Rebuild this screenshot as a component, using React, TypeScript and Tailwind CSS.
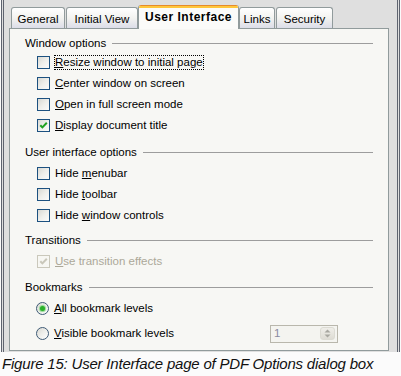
import React from "react";

const font = { fontFamily: '"Liberation Sans", Arial, sans-serif' };

function Check({ checked = false, disabled = false }: { checked?: boolean; disabled?: boolean }) {
  return (
    <span
      className={
        disabled
          ? "flex h-[13px] w-[13px] shrink-0 items-center justify-center border border-[#cac8bb] bg-[#f7f7f3]"
          : "flex h-[13px] w-[13px] shrink-0 items-center justify-center border border-[#1c5180] bg-gradient-to-br from-[#d9d9d3] via-[#efefeb] to-[#fbfbfa]"
      }
    >
      {checked && (
        <svg width="9" height="9" viewBox="0 0 9 9">
          <polyline
            points="1.3,4.2 3.4,6.4 7.8,1.8"
            fill="none"
            stroke={disabled ? "#c9c7ba" : "#21a121"}
            strokeWidth="2"
          />
        </svg>
      )}
    </span>
  );
}

function Radio({ checked = false }: { checked?: boolean }) {
  return (
    <span className="flex h-[13px] w-[13px] shrink-0 items-center justify-center rounded-full border border-[#3e5a75] bg-gradient-to-br from-[#d9d9d3] via-[#efefeb] to-[#ffffff]">
      {checked && <span className="h-[5px] w-[5px] rounded-full bg-[#2ab02a] shadow-[0_0_1px_1px_#8fd88f]" />}
    </span>
  );
}

function Section({ label, mt }: { label: string; mt: string }) {
  return (
    <div className={`${mt} mx-[15px] flex h-[14px] items-center`}>
      <span className="leading-[14px] text-[#000]">{label}</span>
      <span className="ml-[6px] h-px flex-1 bg-[#9d9d9d]" />
    </div>
  );
}

function Label({ children, focus = false, disabled = false }: { children: React.ReactNode; focus?: boolean; disabled?: boolean }) {
  return (
    <span
      className={
        (focus ? "border border-dotted border-[#000] " : "border border-transparent ") +
        (disabled ? "text-[#aca899] " : "text-[#000] ") +
        "ml-[4px] whitespace-nowrap px-0 leading-[13px]"
      }
    >
      {children}
    </span>
  );
}

function Tab({ label, w, ml, selected = false }: { label: string; w: string; ml: string; selected?: boolean }) {
  if (selected) {
    return (
      <div
        className={`${w} ${ml} relative z-10 -mb-px flex h-[24px] flex-col overflow-hidden rounded-t-[3px] border-x border-[#919b9c] bg-[#fbfbf9]`}
      >
        <div className="h-[1px] bg-[#e68b2c]" />
        <div className="h-[2px] bg-[#ffc73c]" />
        <div className="flex flex-1 items-start justify-center pt-[2px]">
          <span className="text-[12px] font-bold leading-[14px] tracking-[0.5px] text-[#000]">{label}</span>
        </div>
      </div>
    );
  }
  return (
    <div
      className={`${w} ${ml} flex h-[21px] items-start justify-center rounded-t-[3px] border-x border-t border-[#919b9c] bg-gradient-to-b from-[#ffffff] via-[#f3f3f0] to-[#dcdde8] pt-[5px]`}
    >
      <span className="leading-[13px] text-[#000]">{label}</span>
    </div>
  );
}

function Row({ mt, children }: { mt: string; children: React.ReactNode }) {
  return <div className={`${mt} flex h-[21px] items-center pl-[27px]`}>{children}</div>;
}

export default function App() {
  return (
    <div className="flex h-[376px] w-[401px] flex-col bg-[#fbfbfb]" style={font}>
      <div className="mx-px flex h-[352px] flex-col border-x-[3px] border-double border-[#5f6470] bg-[#dfdfdf] text-[11.5px]">
        <div className="flex h-[28px] items-end">
          <Tab label="General" w="w-[54px]" ml="ml-[7px]" />
          <Tab label="Initial View" w="w-[72px]" ml="ml-[1px]" />
          <Tab label="User Interface" w="w-[101px]" ml="ml-0" selected />
          <Tab label="Links" w="w-[36px]" ml="ml-0" />
          <Tab label="Security" w="w-[57px]" ml="ml-[1px]" />
        </div>
        <div className="ml-[5px] flex h-[323px] w-[380px] flex-col border border-[#919b9c] bg-[#f7f7f4]">
          <Section label="Window options" mt="mt-[7px]" />
          <Row mt="mt-[2px]">
            <Check />
            <Label focus>
              <u>R</u>esize window to initial page
            </Label>
          </Row>
          <Row mt="mt-0">
            <Check />
            <Label>
              <u>C</u>enter window on screen
            </Label>
          </Row>
          <Row mt="mt-0">
            <Check />
            <Label>
              <u>O</u>pen in full screen mode
            </Label>
          </Row>
          <Row mt="mt-0">
            <Check checked />
            <Label>
              <u>D</u>isplay document title
            </Label>
          </Row>

          <Section label="User interface options" mt="mt-[9px]" />
          <Row mt="mt-[4px]">
            <Check />
            <Label>
              Hide <u>m</u>enubar
            </Label>
          </Row>
          <Row mt="mt-0">
            <Check />
            <Label>
              Hide <u>t</u>oolbar
            </Label>
          </Row>
          <Row mt="mt-0">
            <Check />
            <Label>
              Hide <u>w</u>indow controls
            </Label>
          </Row>

          <Section label="Transitions" mt="mt-[7px]" />
          <Row mt="mt-[4px]">
            <Check checked disabled />
            <Label disabled>
              <u>U</u>se transition effects
            </Label>
          </Row>

          <Section label="Bookmarks" mt="mt-[8px]" />
          <div className="mt-[4px] flex h-[21px] items-center pl-[26px]">
            <Radio checked />
            <Label>
              <u>A</u>ll bookmark levels
            </Label>
          </div>
          <div className="mt-[4px] flex h-[21px] items-center pl-[26px]">
            <Radio />
            <Label>
              <u>V</u>isible bookmark levels
            </Label>
            <div className="ml-auto mr-[50px] flex h-[18px] w-[68px] items-center border border-[#b9b7ac] bg-[#f4f4f0] pl-[3px] pr-[2px]">
              <span className="flex-1 leading-[13px] text-[#8a8aa0]">1</span>
              <span className="flex h-[13px] w-[15px] items-center justify-center rounded-[3px] border border-[#dcdbd3] bg-gradient-to-b from-[#efeee9] to-[#dedcd4]">
                <svg width="7" height="9" viewBox="0 0 7 9">
                  <polygon points="3.5,0.5 6.5,3.5 0.5,3.5" fill="#a8a7a0" />
                  <polygon points="3.5,8.5 6.5,5.5 0.5,5.5" fill="#a8a7a0" />
                </svg>
              </span>
            </div>
          </div>
        </div>
      </div>
      <div className="h-[24px] bg-[#fbfbfb] pl-[2px]">
        <span className="text-[15px] italic leading-[20px] tracking-[-0.2px] text-[#111]">
          Figure 15: User Interface page of PDF Options dialog box
        </span>
      </div>
    </div>
  );
}
